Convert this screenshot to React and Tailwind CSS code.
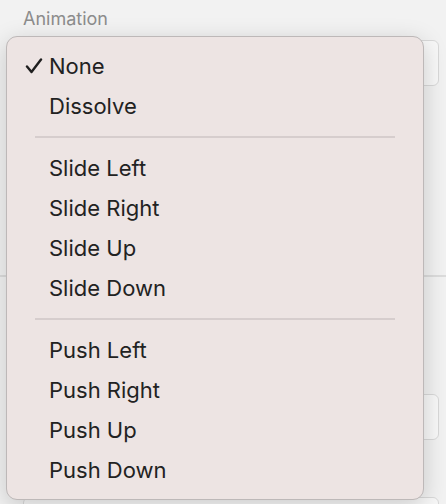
import React from "react";

const groups = [
  ["None", "Dissolve"],
  ["Slide Left", "Slide Right", "Slide Up", "Slide Down"],
  ["Push Left", "Push Right", "Push Up", "Push Down"],
];

const Check = () => (
  <svg width="18" height="16" viewBox="0 0 18 16" className="block">
    <path
      d="M2 8.5 L6.5 14 L16 1.5"
      fill="none"
      stroke="#1f1f1f"
      strokeWidth="2.4"
      strokeLinecap="round"
      strokeLinejoin="round"
    />
  </svg>
);

const App = () => {
  const selected = "None";
  return (
    <div
      className="relative w-[446px] h-[504px] overflow-hidden bg-[#f2f2f2]"
      style={{ fontFamily: "Inter, 'Liberation Sans', sans-serif" }}
    >
      {/* panel behind the menu */}
      <div className="flex flex-col pt-[8px]">
        <div className="pl-[23px] text-[18px] leading-[22px] text-[#8c8c8c]">Animation</div>
        <div className="ml-[23px] mr-[7px] mt-[10px] h-[46px] rounded-[6px] border border-[#d9d9d9] bg-[#f8f8f8]" />
        <div className="mt-[189px] h-[2px] bg-[#dcdcdc]" />
        <div className="ml-[23px] mr-[7px] mt-[117px] h-[46px] rounded-[6px] border border-[#d9d9d9] bg-[#f8f8f8]" />
        <div className="ml-[23px] mr-[7px] mt-[57px] h-[46px] rounded-[6px] border border-[#d9d9d9] bg-[#f8f8f8]" />
      </div>

      {/* popup menu */}
      <div className="absolute left-[6px] top-[36px] w-[418px] h-[464px] rounded-[11px] border border-[#bdb8b8] bg-[#ede4e3] py-[9px] shadow-[0_6px_24px_rgba(0,0,0,0.18)]">
        {groups.map((group, gi) => (
          <div key={gi}>
            {gi > 0 && (
              <div className="flex h-[22px] items-center px-[28px]">
                <div className="h-[2px] w-full bg-[#d6cdcd]" />
              </div>
            )}
            {group.map((item) => (
              <div key={item} className="flex h-[40px] items-center text-[22px] text-[#222]">
                <div className="flex w-[42px] justify-end pr-[6px]">
                  {item === selected && <Check />}
                </div>
                <span>{item}</span>
              </div>
            ))}
          </div>
        ))}
      </div>
    </div>
  );
};

export default App;
